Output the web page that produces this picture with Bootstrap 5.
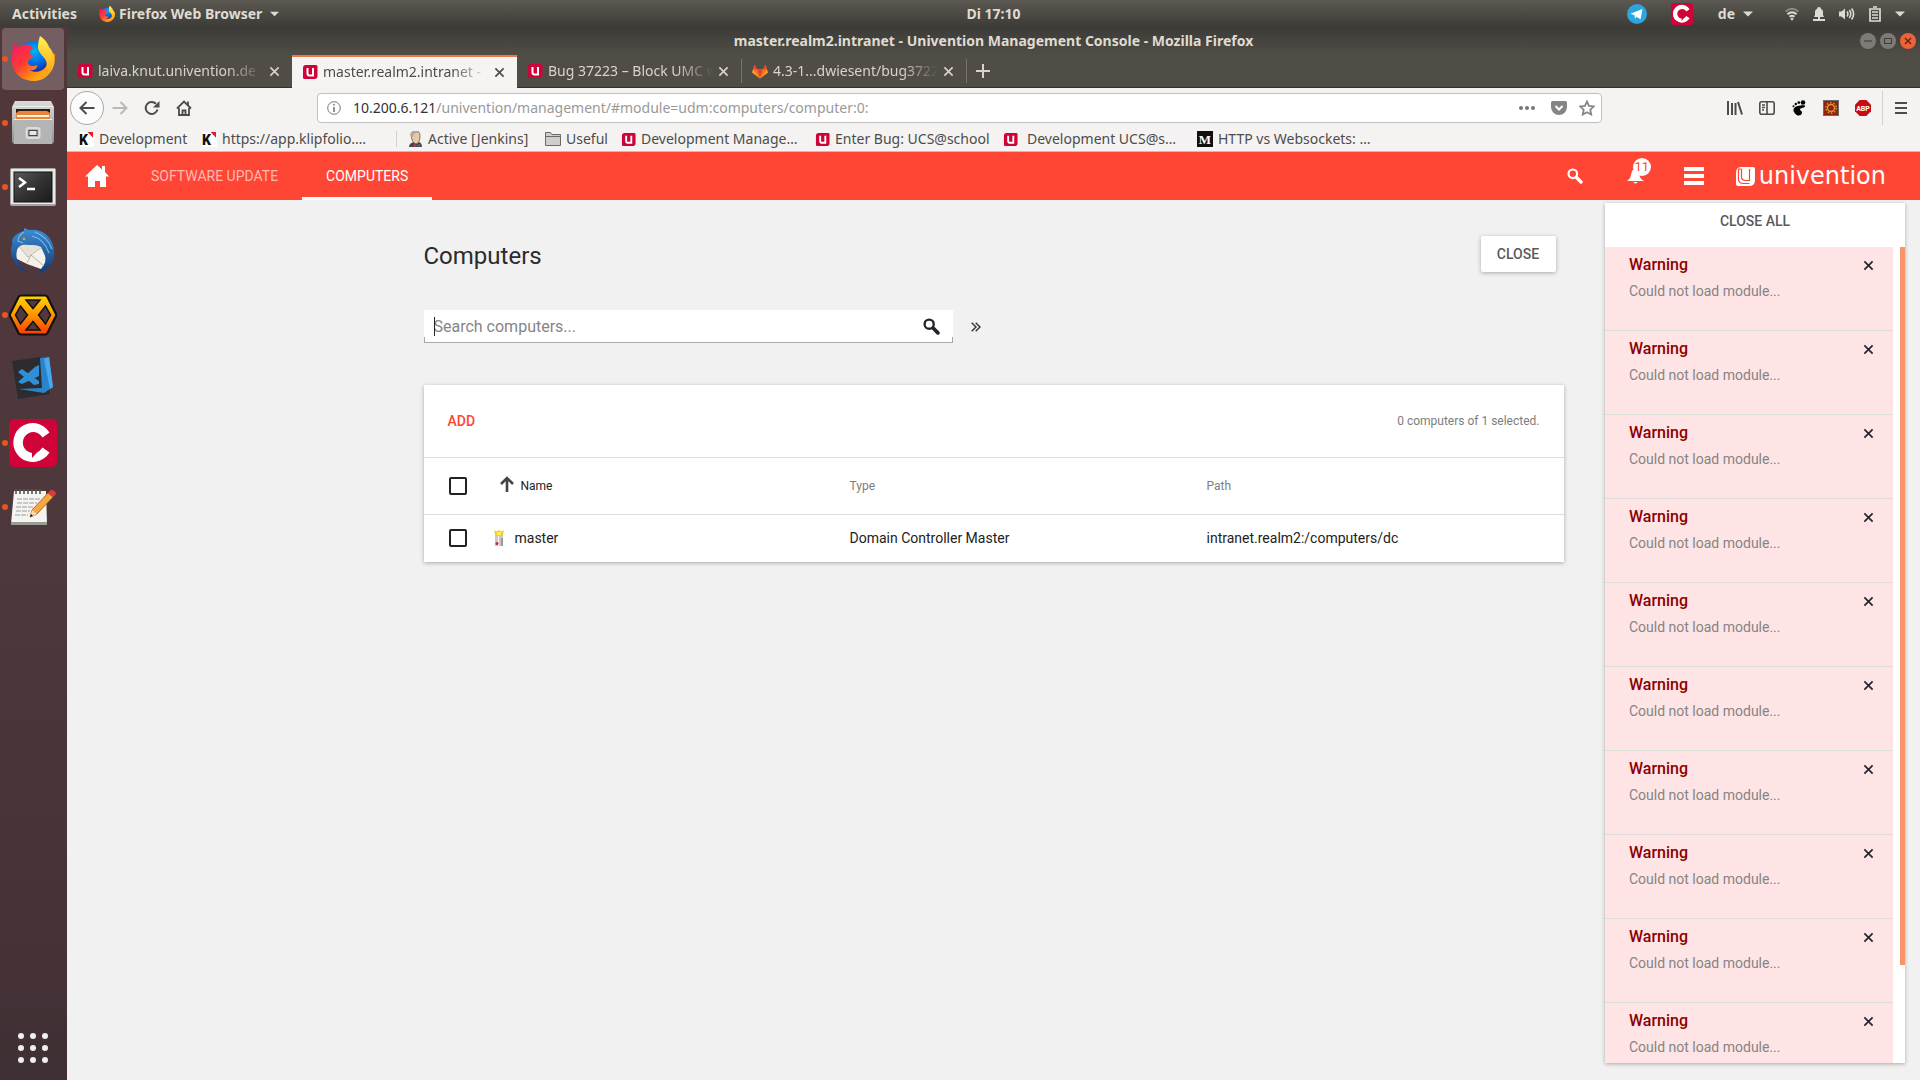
<!DOCTYPE html>
<html lang="en">
<head>
<meta charset="utf-8">
<meta name="viewport" content="width=device-width, initial-scale=1">
<title>master.realm2.intranet - Univention Management Console</title>
<link href="https://cdn.jsdelivr.net/npm/bootstrap@5.3.0/dist/css/bootstrap.min.css" rel="stylesheet">
<style>
:root { --ui: "Noto Sans", "Open Sans", sans-serif; --umc: Roboto, sans-serif; --accent: #ff4635; }
body { font-family: var(--ui); font-size: 14px; line-height: 20px; background: #3c3b37; }
svg { display: block; flex: none; }
button { font: inherit; color: inherit; }
.plain { border: 0; padding: 0; background: none; }

/* desktop panel */
.desk-bar { height: 27px; background: linear-gradient(#5b5951, #3c3b37); color: #dfdbd2; font-weight: 700; padding-left: 67px; }
.desk-start { margin-left: -55px; gap: 22px; }
.thirds { display: grid; grid-template-columns: 1fr auto 1fr; align-items: center; }
.tray { padding-right: 15px; }
.tray-mid { margin: 0 32px 0 25px; }
.tray-icons { gap: 14px; }

/* launcher */
.launcher { width: 67px; background: linear-gradient(#52373a, #4d383c 50%, #453237 88%, #3e3034); }
.launch-item { height: 64px; position: relative; display: flex; align-items: center; justify-content: center; width: 66px; }
.launch-item.current::before { content: ""; position: absolute; inset: 1px 2px; border-radius: 4px; background: #745e62; }
.launch-item svg { position: relative; }
.running::after { content: ""; position: absolute; left: 2px; top: 29px; width: 6px; height: 6px; border-radius: 50%; background: #e95420; }
.apps-grid { padding-bottom: 16px; width: 66px; }

/* browser window */
.win-title { height: 28px; background: linear-gradient(#3c3b37, #504d46); color: #dfdbd2; font-weight: 700; }
.win-tabs { height: 33px; background: #504d46; border-bottom: 1px solid #35322c; color: #d8d4cb; }
.win-tab { width: 225px; height: 33px; padding: 0 12px 0 10px; }
.win-tab.open { background: #f5f4f2; color: #4c4c4c; border-top: 2px solid #f07746; }
.win-tab.divided { border-right: 1px solid #77736a; height: 24px; }
.tab-text { width: 165px; margin-left: 5px; white-space: nowrap; -webkit-mask-image: linear-gradient(90deg, #000 78%, transparent); mask-image: linear-gradient(90deg, #000 78%, transparent); }
.tools { background: #f4f3f1; border-bottom: 1px solid #c3c1be; color: #4c4c4c; }
.nav-row { height: 40px; padding: 0 13px 0 3px; }
.back { width: 34px; height: 34px; border: 1px solid #a9a8a6; border-radius: 50%; background: #fbfbfb; padding: 0; display: flex; align-items: center; justify-content: center; }
.url-box { height: 30px; border: 1px solid #c2c0bd; border-radius: 4px; background: #fff; margin-left: 125px; margin-right: 125px; padding: 0 6px 0 9px; }
.url-text { color: #999; }
.url-text b { color: #333; font-weight: 400; }
.vrule { width: 1px; background: #d3d1ce; }
.nav-row .vrule { height: 34px; margin: 0 12px 0 11px; }
.marks { height: 23px; padding: 1px 12px 0; display: grid; grid-template-columns: 123px 194px 12px 137px 76px 194px 188px 194px auto; }
.marks .vrule { height: 16px; margin-top: 2px; }
.marks a { color: #4c4c4c; text-decoration: none; display: flex; align-items: center; white-space: nowrap; gap: 5px; height: 20px; }

/* management console */
.umc { font-family: var(--umc); background: #f1f1f1; min-height: 0; position: relative; }
.umc-head { height: 48px; background: var(--accent); color: #fff; padding: 0 34px 0 18px; }
.umc-tabs { margin-left: 18px; }
.umc-tab { height: 48px; padding: 0 24px; border-bottom: 3px solid transparent; border-top: 3px solid transparent; color: #ffb9b3; text-decoration: none; display: flex; align-items: center; }
.umc-tab.open { color: #fff; border-bottom-color: #fff; }
.head-search { margin-right: 44px; }
.brand-text { font-family: "DejaVu Sans", sans-serif; font-size: 24px; line-height: 24px; }
.bell { position: relative; }
.bell-count { position: absolute; left: 6px; top: -11px; width: 18px; height: 18px; border-radius: 50%; background: #fff; color: var(--accent); font-size: 13px; line-height: 18px; text-align: center; }
.umc-body { max-width: 1140px; width: 100%; margin: 0 auto; padding-top: 36px; }
.umc-body h1 { font-size: 24px; line-height: 40px; font-weight: 400; color: #2b2b2b; margin: 0; }
.raised { background: #fff; box-shadow: 0 1px 4px rgba(0,0,0,.3); }
.close-btn { height: 36px; width: 75px; border: 0; border-radius: 2px; font-weight: 500; color: #5a5a5a; margin-right: 8px; }
.search-row { margin: 34px 0 42px; }
.search-wrap { width: 529px; position: relative; }
.search-wrap input { width: 100%; height: 33px; border: 0; border-radius: 0; outline: 0; padding: 0 60px 0 10px; font-size: 16px; color: #333;
  background: linear-gradient(#a8a8a8,#a8a8a8) left bottom/100% 1px no-repeat, linear-gradient(#a8a8a8,#a8a8a8) left bottom/1px 6px no-repeat, linear-gradient(#a8a8a8,#a8a8a8) right bottom/1px 6px no-repeat, #fff; }
.search-wrap input::placeholder { color: #858585; opacity: 1; }
.search-wrap .caret { position: absolute; left: 10px; top: 7px; width: 1px; height: 19px; background: #222; }
.search-wrap button { position: absolute; right: 13px; top: 8px; }
.more { margin-left: 18px; color: #333; }
.grid-head { height: 73px; padding: 0 24px; border-bottom: 1px solid #ddd; }
.grid-head .add { color: var(--accent); font-weight: 500; }
.grid-head .count { font-size: 12px; color: #7d7d7d; }
.pc-grid { table-layout: fixed; width: 100%; color: #222; }
.pc-grid th { font-size: 12px; font-weight: 400; color: #7d7d7d; height: 56px; padding: 0; }
.pc-grid .sorted { padding-left: 7px; gap: 7px; color: #222; }
.pc-grid .sorted svg { margin-bottom: 3px; }
.pc-grid .entry { gap: 10px; }
.pc-grid thead { border-bottom: 1px solid #ddd; }
.pc-grid td { height: 48px; padding: 0; }
.pc-grid .pick { width: 69px; padding-left: 25px; }
.pc-grid .form-check-input { width: 18px; height: 18px; margin: 0; border: 2px solid #222; border-radius: 2px; display: block; }

/* notifications */
.notes { position: absolute; top: 51px; right: 15px; bottom: 17px; width: 300px; display: flex; flex-direction: column; }
.notes-all { height: 44px; flex: none; padding-bottom: 8px; font-weight: 500; color: #5a5a5a; }
.notes-list { flex: 1; min-height: 0; overflow: hidden; }
.note { height: 84px; background: #ffe4e5; border-bottom: 1px solid #dcdcdc; padding: 6px 19px 0 24px; }
.note strong { font-size: 16px; font-weight: 500; line-height: 24px; color: #8b0000; }
.note p { margin: 4px 0 0; line-height: 20px; color: #848484; }
.thumb { width: 5px; height: 88%; background: #f79468; margin-left: 7px; }
</style>
<script src="https://cdn.jsdelivr.net/npm/bootstrap@5.3.0/dist/js/bootstrap.bundle.min.js"></script>
</head>
<body class="vh-100 overflow-hidden d-flex flex-column">

<svg width="0" height="0" class="position-absolute" aria-hidden="true">
  <defs>
    <linearGradient id="ffa" x1="0" y1="0" x2="1" y2="1"><stop offset="0" stop-color="#f5156c"/><stop offset=".4" stop-color="#ff3a35"/><stop offset=".7" stop-color="#ff980e"/><stop offset="1" stop-color="#ffd428"/></linearGradient>
    <linearGradient id="ffb" x1="0" y1="0" x2="0" y2="1"><stop offset="0" stop-color="#fff44f"/><stop offset="1" stop-color="#ff9a10"/></linearGradient>
    <radialGradient id="ffc" cx=".5" cy=".3" r=".7"><stop offset="0" stop-color="#00b5f5"/><stop offset=".6" stop-color="#0060df"/><stop offset="1" stop-color="#20138a"/></radialGradient>
    <linearGradient id="hexg" x1="0" y1="0" x2="0" y2="1"><stop offset="0" stop-color="#ffd500"/><stop offset=".5" stop-color="#ff9500"/><stop offset="1" stop-color="#ff3a00"/></linearGradient>
    <linearGradient id="metal" x1="0" y1="0" x2="0" y2="1"><stop offset="0" stop-color="#dcdcdc"/><stop offset="1" stop-color="#8e8e8e"/></linearGradient>
    <linearGradient id="screen" x1="0" y1="0" x2="1" y2="1"><stop offset="0" stop-color="#5a5a5a"/><stop offset=".5" stop-color="#333"/><stop offset="1" stop-color="#1b1b1b"/></linearGradient>
    <linearGradient id="bird" x1="0" y1="0" x2="0" y2="1"><stop offset="0" stop-color="#3d8fd6"/><stop offset="1" stop-color="#123c78"/></linearGradient>
  </defs>
  <symbol id="firefox" viewBox="0 0 44 46">
    <circle cx="23" cy="22" r="17" fill="url(#ffc)"/>
    <path d="M5 6c0 3 1 5 2 6 4-4 10-4 12-3 1 1 2 3 3 4-3 1-4 3-3 5l3 2c-1 3-5 3-5 6 0 4 5 5 9 3 1 3-3 6-8 5 7 4 16 1 18-6 2-7-2-12-6-15l14 5c1 15-8 27-21 27C8 45 0 34 1 22 1 14 3 8 5 6z" fill="url(#ffa)"/>
    <path d="M29 0c6 4 8 8 9 11 5 5 6 13 5 18-2 7-7 11-13 13 5-5 7-11 5-17-2-5-8-8-8-14 0-4 1-8 2-11z" fill="url(#ffb)"/>
  </symbol>
  <symbol id="ufav" viewBox="0 0 16 16">
    <path d="M4 1h10a1.500 1.500 0 0 1 1.500 1.500V12a3 3 0 0 1-3 3H2.500A1.500 1.500 0 0 1 1 13.500V4a3 3 0 0 1 3-3z" fill="#cf0338"/>
    <path d="M5.500 4v5.500A2 2 0 0 0 7.500 11.500h3.500V4" fill="none" stroke="#fff" stroke-width="2"/>
  </symbol>
  <symbol id="xmark" viewBox="0 0 12 12"><path d="M1.500 1.500l9 9M10.500 1.500l-9 9" fill="none" stroke="currentColor" stroke-width="1.800"/></symbol>
  <symbol id="down" viewBox="0 0 10 6"><path d="M0 .5h10L5 5.500z" fill="currentColor"/></symbol>
  <symbol id="lens" viewBox="0 0 16 16"><circle cx="5.800" cy="5.800" r="4.300" fill="none" stroke="currentColor" stroke-width="2.200"/><path d="M9.500 9.500l4.500 4.500" stroke="currentColor" stroke-width="3.400" stroke-linecap="round"/></symbol>
  <symbol id="cee" viewBox="0 0 48 48"><rect width="48" height="48" rx="5" fill="#cf0338"/><path d="M40.500 33.500A19.500 19.500 0 1 1 40.500 13.500L33.500 18.500A10.500 10.500 0 1 0 23 34L23 39L28 33.500Q31 32 33.500 28.500z" fill="#fff"/></symbol>
  <symbol id="klip" viewBox="0 0 16 16"><rect width="16" height="16" fill="#fff"/><text x="0" y="14" font-family="Roboto, sans-serif" font-weight="900" font-size="15" fill="#111">K</text><path d="M9 0h6v6z" fill="#e01b22"/></symbol>
</svg>

<header class="desk-bar thirds">
  <div class="desk-start d-flex align-items-center">
    <span>Activities</span>
    <button class="plain d-flex align-items-center"><svg width="16" height="18"><use href="#firefox"/></svg><span class="ms-1 me-1">Firefox Web Browser</span><svg width="9" height="6" class="ms-1"><use href="#down"/></svg></button>
  </div>
  <span>Di 17:10</span>
  <div class="tray d-flex align-items-center justify-content-end">
    <svg width="20" height="20" viewBox="0 0 20 20"><circle cx="10" cy="10" r="10" fill="#2ca5e0"/><path d="M3.500 9.800L15.500 5l-2 10.500-3.700-2.700-1.800 1.900-.5-3.400z" fill="#fff"/></svg>
    <svg width="22" height="22" class="ms-4"><use href="#cee"/></svg>
    <span class="tray-mid d-flex align-items-center gap-2">de <svg width="10" height="6"><use href="#down"/></svg></span>
    <div class="tray-icons d-flex align-items-center">
      <svg width="14" height="14" viewBox="0 0 14 14" fill="none" stroke="#dfdbd2" stroke-width="2"><path d="M.7 4.500q6.300-5.500 12.600 0" stroke="#8c8a83"/><path d="M2.500 7.200q4.500-3.800 9 0M4.500 9.700q2.500-2 5 0"/><circle cx="7" cy="12" r="1" fill="#dfdbd2" stroke-width="1"/></svg>
      <svg width="12" height="14" viewBox="0 0 12 14" fill="#dfdbd2"><path d="M6 0a2 2 0 0 1 2 2c1.500.5 2 1.500 2 3v3l1 2H1l1-2V5c0-1.500.5-2.500 2-3a2 2 0 0 1 2-2zM0 12h12v2H0zM5 10h2v2H5z"/></svg>
      <svg width="16" height="14" viewBox="0 0 16 14" fill="none" stroke="#dfdbd2" stroke-width="1.600"><path d="M0 4.500h2.500L6 1.500v11L2.500 9.500H0z" fill="#dfdbd2" stroke="none"/><path d="M8 4.500q1.800 2.500 0 5M10.300 3q3 4 0 8M12.600 1.500q4 5.500 0 11"/></svg>
      <svg width="12" height="16" viewBox="0 0 12 16" fill="none" stroke="#dfdbd2" stroke-width="2"><path d="M1 3h10v12H1zM4 1h4M3 6h6M3 9h6M3 12h6" stroke-width="1.700"/></svg>
      <svg width="10" height="6"><use href="#down"/></svg>
    </div>
  </div>
</header>

<div class="d-flex flex-grow-1" style="min-height:0">
  <nav class="launcher d-flex flex-column flex-shrink-0" aria-label="Launcher">
    <a href="#" class="launch-item current running" aria-label="Firefox"><svg width="44" height="46"><use href="#firefox"/></svg></a>
    <a href="#" class="launch-item running" aria-label="Files"><svg width="42" height="44" viewBox="0 0 42 44"><path d="M3 0h36l3 6v35l-2 2H2l-2-2V6z" fill="url(#metal)"/><path d="M1 5h40v1H1z" fill="#eee"/><path d="M4 8h34v10H4z" fill="#2b1c12"/><path d="M4 12l3-2h28l3 2v6H4z" fill="#e8853c"/><path d="M5 14h32v2H5z" fill="#fff1d6"/><path d="M2 18h38v25H2z" fill="#b4b4b4"/><path d="M2 18h38v1H2z" fill="#eee"/><rect x="14.500" y="27" width="13" height="10" rx="2" fill="none" stroke="#ddd" stroke-width="2"/><rect x="17" y="29.500" width="8" height="5" fill="#e8e8e8" stroke="#444"/></svg></a>
    <a href="#" class="launch-item running" aria-label="Terminal"><svg width="46" height="38" viewBox="0 0 46 38"><rect width="46" height="38" rx="2" fill="#a4a4a4"/><rect x="1" y="1" width="44" height="35" fill="#e9e9e9"/><rect x="4" y="4" width="38" height="30" fill="url(#screen)" stroke="#111"/><path d="M9 10l6 4.500-6 4.500M17 21h8" fill="none" stroke="#fff" stroke-width="2.400"/></svg></a>
    <a href="#" class="launch-item" aria-label="Thunderbird"><svg width="46" height="46" viewBox="0 0 46 46"><path d="M2 30C-2 14 8 1 24 2c14 1 23 14 19 29-2 8-8 13-15 14 4-4 5-8 4-12z" fill="url(#bird)"/><path d="M5 30l3-14 22 1 7 15-6 9-14-5z" fill="#f4f1ea"/><path d="M8 17l10 12 14-10M17 35l4-8 13 11" fill="none" stroke="#b8b4aa"/><path d="M8 17l10 11 13-9q-3-7-12-7-8 0-11 5z" fill="#e6e1d6"/><path d="M2 12C3 22 0 29 6 36c2 4 7 8 12 8C8 38 5 30 7 22c2-5 6-6 11-5 7 0 12 0 15 4 4 7 3 16-2 22 10-3 14-12 13-21C42 8 31 0 19 2l-5-2v3C8 5 4 7 2 12z" fill="url(#bird)"/><path d="M25 4c8 3 14 9 17 17M22 8c8 2 14 8 17 17M14 4q-6 4-6 9l5 2" fill="none" stroke="#79b8ea" stroke-width="1.200"/><circle cx="14" cy="11" r="1.300" fill="#e99b31"/></svg></a>
    <a href="#" class="launch-item running" aria-label="Hexchat"><svg width="48" height="42" viewBox="0 0 48 42"><path d="M12 1.500h24a3 3 0 0 1 2.500 1.500L47 20a2 2 0 0 1 0 2l-8.500 17a3 3 0 0 1-2.500 1.500H12A3 3 0 0 1 9.500 39L1 22a2 2 0 0 1 0-2L9.500 3A3 3 0 0 1 12 1.500z" fill="url(#hexg)" stroke="#111" stroke-width="2.200"/><path d="M17 6h14l-7 8.500zM17 36h14l-7-8.500zM11.500 12l7 9-7 9-5-9zM36.500 12l-7 9 7 9 5-9z" fill="#503a3e" stroke="#111" stroke-width="1.500"/></svg></a>
    <a href="#" class="launch-item" aria-label="Code"><svg width="42" height="44" viewBox="0 0 42 44"><path d="M0 4l29-4 9 37-32 5z" fill="#2c2c30"/><path d="M28 1l9-1 4 30-9 6-25-4 23-1z" fill="#2a84cb"/><path d="M37 0l4 30-3 2L32 2z" fill="#4aa8ee"/><path d="M6 15l4-3 17 12v-5L10 27l-4-2 17-15 4-2v19l-5 1z" fill="#2f8fd6"/></svg></a>
    <a href="#" class="launch-item running" aria-label="Chat"><svg width="48" height="48"><use href="#cee"/></svg></a>
    <a href="#" class="launch-item running" aria-label="Text editor"><svg width="46" height="38" viewBox="0 0 46 38"><path d="M4 3h32l1 33H1z" fill="#f4f4f0"/><path d="M1 34h36v3H1z" fill="#9a9a96"/><path d="M6 1v5M10 1v5M14 1v5M18 1v5M22 1v5M26 1v5M30 1v5" stroke="#555" stroke-width="1.600"/><path d="M7 11h24M7 15h20M6 19h18M6 23h14M5 27h13" stroke="#9b9b9b" stroke-dasharray="5 1"/><path d="M20 29l2-7L38 5l5 4-16 17z" fill="#f5a742" stroke="#a9590f" stroke-width=".8"/><path d="M38 5l3-3q4 0 5 4l-3 3z" fill="#e23a3a"/><path d="M20 29l2-7 5 4z" fill="#f3dcb4"/><path d="M20 29l1-3 2 2z" fill="#111"/></svg></a>
    <a href="#" class="apps-grid mt-auto d-flex justify-content-center" aria-label="Show applications"><svg width="32" height="32" viewBox="0 0 32 32" fill="#f0efee"><circle cx="4" cy="4" r="3"/><circle cx="16" cy="4" r="3"/><circle cx="28" cy="4" r="3"/><circle cx="4" cy="16" r="3"/><circle cx="16" cy="16" r="3"/><circle cx="28" cy="16" r="3"/><circle cx="4" cy="28" r="3"/><circle cx="16" cy="28" r="3"/><circle cx="28" cy="28" r="3"/></svg></a>
  </nav>

  <div class="d-flex flex-column flex-grow-1" style="min-width:0">
    <div class="win-title thirds">
      <span></span>
      <span>master.realm2.intranet - Univention Management Console - Mozilla Firefox</span>
      <div class="d-flex justify-content-end gap-1 pe-1">
        <button class="plain" aria-label="Minimize"><svg width="16" height="16" viewBox="0 0 16 16"><circle cx="8" cy="8" r="8" fill="#7d7b74"/><path d="M4 8h8" stroke="#3c3b37"/></svg></button>
        <button class="plain" aria-label="Maximize"><svg width="16" height="16" viewBox="0 0 16 16"><circle cx="8" cy="8" r="8" fill="#7d7b74"/><rect x="4.500" y="5.500" width="7" height="5" fill="none" stroke="#3c3b37"/></svg></button>
        <button class="plain" aria-label="Close window"><svg width="16" height="16" viewBox="0 0 16 16"><circle cx="8" cy="8" r="8" fill="#ee6238"/><path d="M5 5l6 6M11 5l-6 6" stroke="#5c2312" stroke-width="1.300"/></svg></button>
      </div>
    </div>

    <div class="win-tabs d-flex align-items-center">
      <div class="win-tab d-flex align-items-center"><svg width="16" height="16"><use href="#ufav"/></svg><span class="tab-text">laiva.knut.univention.de</span><button class="plain ms-auto" aria-label="Close tab"><svg width="11" height="11"><use href="#xmark"/></svg></button></div>
      <div class="win-tab open d-flex align-items-center"><svg width="16" height="16"><use href="#ufav"/></svg><span class="tab-text">master.realm2.intranet -</span><button class="plain ms-auto" aria-label="Close tab"><svg width="11" height="11"><use href="#xmark"/></svg></button></div>
      <div class="win-tab divided d-flex align-items-center"><svg width="16" height="16"><use href="#ufav"/></svg><span class="tab-text">Bug 37223 – Block UMC w</span><button class="plain ms-auto" aria-label="Close tab"><svg width="11" height="11"><use href="#xmark"/></svg></button></div>
      <div class="win-tab divided d-flex align-items-center"><svg width="16" height="16" viewBox="0 0 16 16"><path d="M8 15.500L0 9.500 2.500 1.500 5 6.500h6l2.500-5L16 9.500z" fill="#fca326"/><path d="M8 15.500L5 6.500h6z" fill="#e24329"/><path d="M8 15.500L5 6.500H1zM8 15.500l3-9h4z" fill="#fc6d26"/><path d="M2.500 1.500L1 6.500h4zM13.500 1.500l-2.500 5h4z" fill="#e24329"/></svg><span class="tab-text">4.3-1...dwiesent/bug3722</span><button class="plain ms-auto" aria-label="Close tab"><svg width="11" height="11"><use href="#xmark"/></svg></button></div>
      <button class="plain ps-2" aria-label="New tab"><svg width="16" height="16" viewBox="0 0 16 16"><path d="M8 1v14M1 8h14" stroke="currentColor" stroke-width="2"/></svg></button>
    </div>

    <div class="tools">
      <div class="nav-row d-flex align-items-center">
        <button class="back" aria-label="Back"><svg width="16" height="14" viewBox="0 0 16 14"><path d="M7.500 1L1.500 7l6 6M2 7h13.500" fill="none" stroke="#4c4c4c" stroke-width="2"/></svg></button>
        <button class="plain ms-2" aria-label="Forward"><svg width="16" height="14" viewBox="0 0 16 14"><path d="M8.500 1l6 6-6 6M14 7H.5" fill="none" stroke="#b9b8b6" stroke-width="2"/></svg></button>
        <button class="plain ms-3" aria-label="Reload"><svg width="16" height="16" viewBox="0 0 16 16"><path d="M13.500 9.500A6 6 0 1 1 12 3.800" fill="none" stroke="#4c4c4c" stroke-width="2"/><path d="M15.500 1v6.500H9z" fill="#4c4c4c"/></svg></button>
        <button class="plain ms-3" aria-label="Home"><svg width="16" height="16" viewBox="0 0 16 16"><path d="M1 8.500l7-7 7 7M3 8v7h10V8M6.500 15v-4.500h3V15M12 1.500V5" fill="none" stroke="#4c4c4c" stroke-width="1.800"/></svg></button>
        <div class="url-box d-flex align-items-center flex-grow-1">
          <svg width="14" height="14" viewBox="0 0 14 14"><circle cx="7" cy="7" r="6.300" fill="none" stroke="#777"/><path d="M7 3v1.500M7 6v5" stroke="#777" stroke-width="1.600"/></svg>
          <span class="url-text flex-grow-1 ms-2 ps-1"><b>10.200.6.121</b>/univention/management/#module=udm:computers/computer:0:</span>
          <svg width="16" height="4" viewBox="0 0 16 4" fill="#777"><circle cx="2" cy="2" r="2"/><circle cx="8" cy="2" r="2"/><circle cx="14" cy="2" r="2"/></svg>
          <svg width="16" height="14" viewBox="0 0 16 14" class="ms-2 ps-0 me-2 ms-3"><path d="M1.500 0h13A1.500 1.500 0 0 1 16 1.500V6a8 8 0 0 1-16 0V1.500A1.500 1.500 0 0 1 1.500 0z" fill="#858585"/><path d="M4.500 5L8 8.500 11.500 5" fill="none" stroke="#fff" stroke-width="2"/></svg>
          <svg width="16" height="16" viewBox="0 0 16 16" class="ms-1"><path d="M8 1.500l2 4.300 4.800.6-3.500 3.300.9 4.800L8 12.200l-4.200 2.300.9-4.800L1.200 6.400 6 5.800z" fill="none" stroke="#858585" stroke-width="1.800"/></svg>
        </div>
        <div class="d-flex align-items-center gap-3">
          <svg width="16" height="14" viewBox="0 0 16 14" stroke="#4c4c4c" stroke-width="2"><path d="M1 0v14M5 2v12M8.500 2v12M11 1l4 12.500" fill="none"/></svg>
          <svg width="16" height="14" viewBox="0 0 16 14" fill="none" stroke="#4c4c4c" stroke-width="1.600"><rect x=".8" y=".8" width="14.400" height="12.400" rx="2"/><path d="M8 1v12M3 4h3M3 6.500h3M3 9h2"/></svg>
          <svg width="16" height="16" viewBox="0 0 16 16"><path d="M14 6.500c-1 2-5 1-5 3 0 1.500 2 1 2 3S9 16 7 15.500 2 12 2.500 9.500 6 6 9 5.500s6-.5 5 1z"/><ellipse cx="12" cy="2.500" rx="2.300" ry="2.200"/><circle cx="7.800" cy="2.600" r="1.400"/><circle cx="4.800" cy="4" r="1.200"/><circle cx="2.500" cy="6.200" r="1"/></svg>
          <svg width="16" height="16" viewBox="0 0 16 16"><rect width="16" height="16" fill="#6d6d6d"/><rect x="1" y="1" width="14" height="14" fill="#8c2412"/><circle cx="8" cy="8" r="3.500" fill="none" stroke="#e0952b" stroke-width="1.400"/><circle cx="8" cy="8" r="5.200" fill="none" stroke="#e0952b" stroke-width="1.500" stroke-dasharray="1.500 1.770"/></svg>
          <svg width="16" height="16" viewBox="0 0 16 16"><path d="M4.700 0h6.600L16 4.700v6.600L11.300 16H4.700L0 11.300V4.700z" fill="#c70d12"/><text x="8" y="10.500" text-anchor="middle" font-family="Roboto, sans-serif" font-weight="700" font-size="7" fill="#fff">ABP</text></svg>
        </div>
        <div class="vrule"></div>
        <svg width="12" height="12" viewBox="0 0 12 12"><path d="M0 1h12M0 6h12M0 11h12" stroke="#4c4c4c" stroke-width="2"/></svg>
      </div>
      <div class="marks">
        <a href="#"><svg width="15" height="15"><use href="#klip"/></svg>Development</a>
        <a href="#"><svg width="15" height="15"><use href="#klip"/></svg>https://app.klipfolio.…</a>
        <div class="vrule"></div>
        <a href="#"><svg width="15" height="16" viewBox="0 0 15 16"><path d="M1 16q0-4 5-5h5q3 1 3 5z" fill="#3c4a58"/><path d="M3 4q0-4 5-4 4 0 4 5 0 7-4 8Q4 12 3 4z" fill="#e8c9a6" stroke="#5a4a3c" stroke-width=".7"/><path d="M3 6Q1 1 7 0q3 0 4 2Q6 1 5 6z" fill="#b9ab9a"/><path d="M6 13l3 1.500L12 13v3l-3-1.500L6 16z" fill="#d33833"/></svg>Active [Jenkins]</a>
        <a href="#"><svg width="16" height="14" viewBox="0 0 16 14"><path d="M.5 13.500V.5h5l1.500 2h8.500v11z" fill="#cfcecb" stroke="#6a6a6a"/><path d="M1 4.500h14" stroke="#6a6a6a"/></svg>Useful</a>
        <a href="#"><svg width="15" height="15"><use href="#ufav"/></svg>Development Manage…</a>
        <a href="#"><svg width="15" height="15"><use href="#ufav"/></svg>Enter Bug: UCS@school</a>
        <a href="#"><svg width="15" height="15"><use href="#ufav"/></svg><span class="ms-1">Development UCS@s…</span></a>
        <a href="#"><svg width="16" height="16" viewBox="0 0 16 16"><rect width="16" height="16" fill="#111"/><text x="8" y="12.500" text-anchor="middle" font-family="Liberation Serif, serif" font-weight="700" font-size="13" fill="#fff">M</text></svg>HTTP vs Websockets: …</a>
      </div>
    </div>

    <div class="umc flex-grow-1">
      <div class="umc-head d-flex align-items-center">
        <a href="#" class="text-white" aria-label="Home"><svg width="24" height="22" viewBox="0 0 24 22"><path d="M12 0l5 4.500V1h3v6l4 4.500h-3V22h-6v-6h-5v6H3V11.500H0z" fill="currentColor"/></svg></a>
        <nav class="umc-tabs d-flex"><a href="#" class="umc-tab">SOFTWARE UPDATE</a><a href="#" class="umc-tab open">COMPUTERS</a></nav>
        <div class="ms-auto d-flex align-items-center">
          <button class="plain head-search" aria-label="Search"><svg width="16" height="16"><use href="#lens"/></svg></button>
          <button class="plain bell me-4" aria-label="Notifications"><svg width="17" height="15" viewBox="0 0 17 15"><path d="M8 0c3 0 4 3 4.500 6s1.500 4 4.500 6H0c3-2 3.500-4 4-6s1-6 4-6zM6.500 13h4q-2 3-4 0z" fill="#fff"/></svg><span class="bell-count">11</span></button>
          <button class="plain ms-3 me-4" aria-label="Menu"><svg width="20" height="18" viewBox="0 0 20 18"><path d="M0 2h20M0 9h20M0 16h20" stroke="#fff" stroke-width="4"/></svg></button>
          <span class="d-flex align-items-center gap-1 ms-2"><svg width="19" height="19" viewBox="0 0 19 19"><path d="M5 0h12q2 0 2 2v11q0 6-6 6H2q-2 0-2-2V6q0-6 5-6z" fill="#fff"/><path d="M5.500 2v7.500q0 4 4 4h4V2M5.500 2H2.500v10q0 4.500 5 4.500h6" fill="none" stroke="#ff4635" stroke-width="1.200"/></svg><span class="brand-text">univention</span></span>
        </div>
      </div>

      <main class="umc-body">
        <div class="d-flex justify-content-between"><h1>Computers</h1><button class="close-btn raised">CLOSE</button></div>
        <div class="search-row d-flex">
          <div class="search-wrap"><input type="text" placeholder="Search computers..." aria-label="Search computers"><span class="caret"></span><button class="plain" aria-label="Search"><svg width="17" height="17"><use href="#lens"/></svg></button></div>
          <button class="plain more" aria-label="More search options"><svg width="10" height="10" viewBox="0 0 10 10"><path d="M.7 .7L5 5 .7 9.300M4.700 .7L9 5 4.700 9.300" fill="none" stroke="currentColor" stroke-width="1.400"/></svg></button>
        </div>
        <section class="raised">
          <div class="grid-head d-flex align-items-center justify-content-between"><button class="plain add">ADD</button><span class="count">0 computers of 1 selected.</span></div>
          <table class="pc-grid">
            <thead><tr><th class="pick"><input type="checkbox" class="form-check-input" aria-label="Select all"></th>
              <th><span class="sorted d-flex align-items-center"><svg width="14" height="16" viewBox="0 0 14 16"><path d="M7 16V2M1 8l6-6 6 6" fill="none" stroke="#444" stroke-width="2.600"/></svg>Name</span></th><th>Type</th><th>Path</th></tr></thead>
            <tbody><tr><td class="pick"><input type="checkbox" class="form-check-input" aria-label="Select master"></td>
              <td><span class="entry d-flex align-items-center"><svg width="12" height="16" viewBox="0 0 12 16"><path d="M2 4h8v12H2z" fill="#c9c9c9"/><path d="M5 5h1v11H5z" fill="#f4f4f4"/><path d="M8 8h2v8H8z" fill="#999"/><path d="M1 0l2.500 1.500L6 0l2.500 1.500L11 0l-1.500 6h-7z" fill="#f7c92b"/><path d="M4 2h4v3H4z" fill="#fff04a"/><circle cx="4" cy="13.500" r="1.500" fill="#d22"/></svg>master</span></td><td>Domain Controller Master</td><td>intranet.realm2:/computers/dc</td></tr></tbody>
          </table>
        </section>
      </main>

      <aside class="notes raised" aria-label="Notifications">
        <button class="plain notes-all">CLOSE ALL</button>
        <div class="d-flex flex-grow-1" style="min-height:0">
          <div class="notes-list" id="notes">
            <div class="note"><div class="d-flex justify-content-between align-items-center"><strong>Warning</strong><button class="plain" aria-label="Dismiss"><svg width="11" height="11"><use href="#xmark"/></svg></button></div><p>Could not load module...</p></div>
          </div>
          <div class="thumb"></div>
        </div>
      </aside>
    </div>
  </div>
</div>
<script>
/* the same warning was raised repeatedly */
const list = document.getElementById('notes');
const first = list.firstElementChild;
for (let i = 1; i < 10; i++) list.append(first.cloneNode(true));
</script>
</body>
</html>
